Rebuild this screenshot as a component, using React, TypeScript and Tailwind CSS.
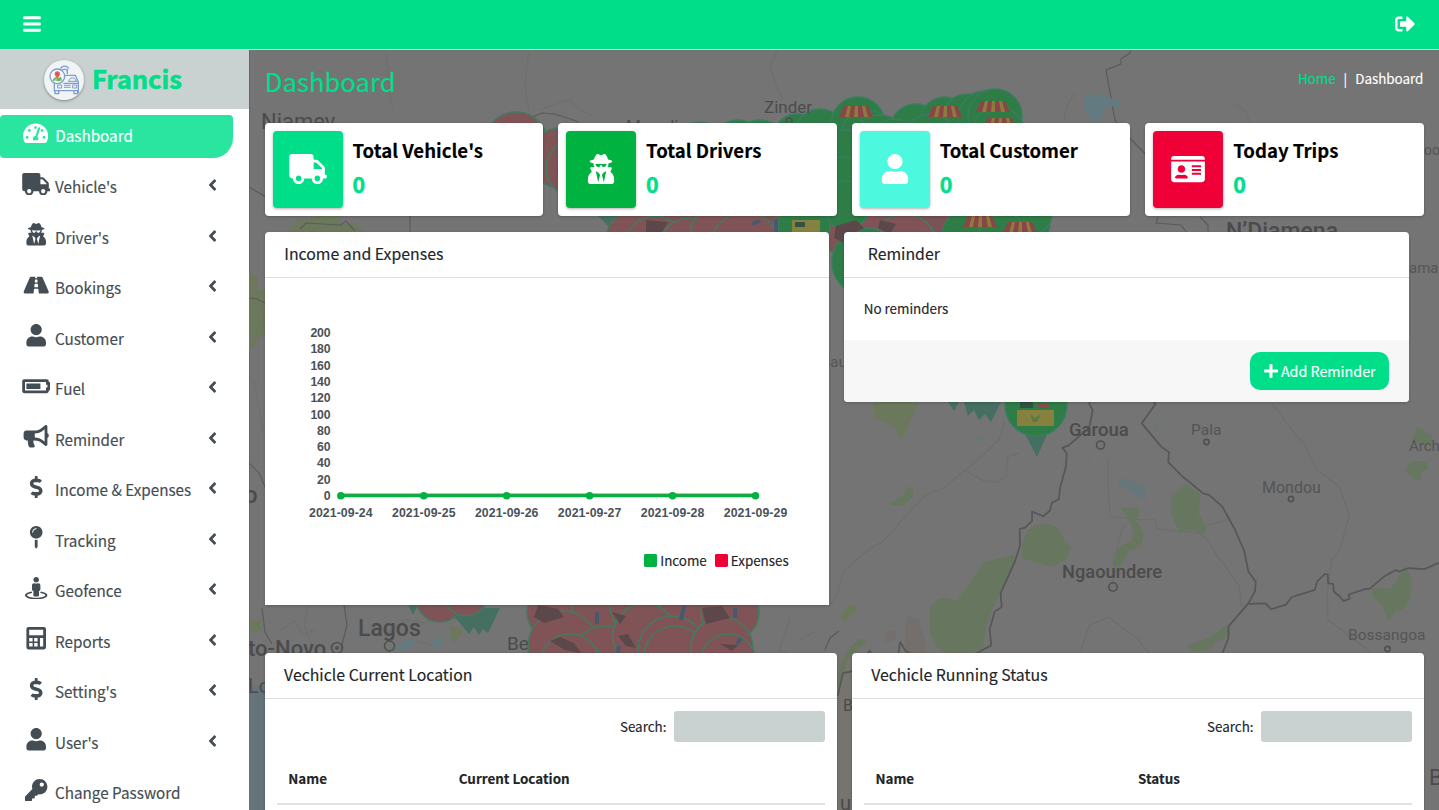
import React from "react";
import type { IconType } from "react-icons";
import {
  FaAngleLeft,
  FaBars,
  FaBatteryThreeQuarters,
  FaBullhorn,
  FaDollarSign,
  FaIdCard,
  FaKey,
  FaMapPin,
  FaPlus,
  FaRoad,
  FaSignOutAlt,
  FaSquare,
  FaStreetView,
  FaTachometerAlt,
  FaTruck,
  FaUser,
  FaUserSecret,
} from "react-icons/fa";

function Calculator({ className }: { className?: string }) {
  return (
    <svg viewBox="0 0 448 512" fill="currentColor" className={className}>
      <path
        fillRule="evenodd"
        d="M48 0h352a48 48 0 0148 48v416a48 48 0 01-48 48H48a48 48 0 01-48-48V48A48 48 0 0148 0zM64 64v122h320V64zM64 250v82h78v-82zM178 250v82h78v-82zM64 368v80h78v-80zM178 368v80h78v-80zM310 250v198h74V250z"
      />
    </svg>
  );
}

type IconComponent = IconType | typeof Calculator;

const NAV: { label: string; icon: IconComponent; arrow: boolean }[] = [
  { label: "Vehicle's", icon: FaTruck, arrow: true },
  { label: "Driver's", icon: FaUserSecret, arrow: true },
  { label: "Bookings", icon: FaRoad, arrow: true },
  { label: "Customer", icon: FaUser, arrow: true },
  { label: "Fuel", icon: FaBatteryThreeQuarters, arrow: true },
  { label: "Reminder", icon: FaBullhorn, arrow: true },
  { label: "Income & Expenses", icon: FaDollarSign, arrow: true },
  { label: "Tracking", icon: FaMapPin, arrow: true },
  { label: "Geofence", icon: FaStreetView, arrow: true },
  { label: "Reports", icon: Calculator, arrow: true },
  { label: "Setting's", icon: FaDollarSign, arrow: true },
  { label: "User's", icon: FaUser, arrow: true },
  { label: "Change Password", icon: FaKey, arrow: false },
];

const STATS: { label: string; icon: IconType; color: string }[] = [
  { label: "Total Vehicle's", icon: FaTruck, color: "bg-[#00de8a]" },
  { label: "Total Drivers", icon: FaUserSecret, color: "bg-[#00b341]" },
  { label: "Total Customer", icon: FaUser, color: "bg-[#4df9de]" },
  { label: "Today Trips", icon: FaIdCard, color: "bg-[#ef0037]" },
];

const DATES = ["2021-09-24", "2021-09-25", "2021-09-26", "2021-09-27", "2021-09-28", "2021-09-29"];
const TICKS = [200, 180, 160, 140, 120, 100, 80, 60, 40, 20, 0];

function Logo() {
  return (
    <svg viewBox="0 0 120 120" className="size-10 rounded-full bg-[#f0f4f5] shadow-[0_1px_3px_rgba(0,0,0,0.35)]" fill="none" stroke="#7f9bd1" strokeWidth="4">
      <path d="M50 26c4-10 20-10 24 0M54 32c3-6 12-6 15 0M70 28v14" />
      <path d="M62 46h32l9 20v33M31 66v26h72M31 92h72V70H58" />
      <path d="M75 64c0-14 20-14 21 0M72 64h28" strokeWidth="3" />
      <path d="M33 92v9h11v-9M90 92v9h11v-9" />
      <path d="M41 75h12v9H41zM86 75h12v9H86zM60 76h20M60 82h20" strokeWidth="3" />
      <circle cx="40" cy="49" r="22" fill="#f5f7f8" />
      <path d="M27 58l8-7 7 4 8-5 5 11-13 3-8-3-8 3z" fill="#63b45f" stroke="none" />
      <path d="M31 60l6-5 3 6zM46 56l6 1 1 4z" fill="#f0c44a" stroke="none" />
      <path d="M40 56c-5-7-8-10-8-14a8 8 0 0116 0c0 4-3 7-8 14z" fill="#ea5f5c" stroke="none" />
      <circle cx="40" cy="42" r="3" fill="#c9485a" stroke="none" />
    </svg>
  );
}

type Pin = [number, number, number];

const RED_PINS: Pin[] = [
  [516, 144, 32], [560, 158, 30], [574, 168, 28], [700, 150, 28], [636, 240, 30], [655, 246, 30], [690, 250, 32],
  [720, 236, 30], [745, 246, 34], [800, 226, 26], [844, 222, 32], [875, 240, 34], [905, 246, 32], [440, 598, 24],
  [466, 594, 22], [555, 612, 28], [600, 612, 28], [640, 606, 30], [690, 610, 30], [730, 612, 29], [563, 646, 35],
  [605, 660, 34], [645, 636, 32], [672, 650, 34], [675, 657, 31], [722, 648, 31], [728, 662, 28], [578, 672, 30], [570, 664, 30],
];

const GREEN_PINS: Pin[] = [
  [738, 146, 26], [760, 146, 26], [797, 138, 24], [820, 134, 25], [858, 124, 27], [867, 136, 26], [916, 130, 26], [945, 122, 25],
  [968, 122, 28], [985, 118, 27], [995, 116, 27], [998, 134, 27], [880, 142, 27], [895, 145, 26], [930, 140, 26],
  [845, 160, 30], [843, 185, 28], [846, 205, 24], [990, 206, 26], [1022, 222, 28], [1032, 214, 20], [804, 226, 26], [970, 236, 28], [1004, 240, 26],
  [866, 262, 34],
];

function Awning({ x, y }: { x: number; y: number }) {
  return (
    <g transform={`translate(${x} ${y})`}>
      <path d="M-12-6h24l5 11h-34z" fill="#8a4548" />
      <path d="M-8-6h3l-2 11h-4zM-1-6h3v11h-4zM6-6h3l3 11H8z" fill="#8b7c3d" />
    </g>
  );
}

function MapBackdrop() {
  return (
    <svg viewBox="249 50 1190 760" className="absolute inset-0 h-full w-full" fontFamily="Roboto, sans-serif">
      <rect x="249" y="50" width="1190" height="760" fill="#747474" />
      <path d="M249 50h1v760h-1z" fill="#666" />
      <path d="M249 686h30v124h-30z" fill="#64747a" />
      <path d="M829 655h25v155h-25z" fill="#76746f" />
      <g fill="#6b785c">
        <path d="M288 232l10-13h12l2-8 24 4 7 9 11-1 12 10zM249 273l9 4-1 13h8v42l-16 20z" />
        <path d="M874 402h44l-8 20-9 18-7-14-20-8z" />
        <path d="M840 617l8-12 12 2-15 15zM450 625l13 5-8 13-4-6zM249 622l13-3v10l-9 5z" />
      </g>
      <g fill="none" stroke="#6f706a" strokeWidth="1.200">
        <path d="M385 50c6 25 1 40 8 58M530 50c-8 30-4 45 0 67M777 50l-7 17 6 17 7 17M570 100l8 9 14 7M540 110l33-12M262 310l10 60M254 380l9 52M1065 130c-3-15 2-25 10-37M1235 105c15 5 15 20 16 30" />
        <path d="M280 630l15-9 8 14 12-5M308 605l-4 20 8 20M385 635l20-15 20 3 20-8M410 640l25 6M700 635l24-14 12 16M790 620l-11 30 10 4M800 640l14-8" />
      </g>
      <g fill="none" stroke="#5b5b5c" strokeWidth="1.200">
        <path d="M525 120l17-7 13 1 24 8M249 187l17 10M300 229l6-6 35 2 5-4 9 10M410 216v16M1130 50v3l-9 6v5l-15 6 9 50 13 16 20 21M1158 217l-2 6 25 2 6 8M1200 217l8 8v8M249 463l10 10 7 16M249 298l8 1 8 4M262 608l3 24 7 12M344 605l3 20-6 24M825 650l5-12 9-7" />
      </g>
      <g transform="translate(829 400) scale(0.389)">
        <g fill="#67775f">
          <path d="M153 267l38-22 10-20 15-2v25l-23 21-22 4zM496 370l16-36 19-12 29-6 24 10 16 19 5 21 19 12-14 32-38 20-77-24zM259 535l18-22 26-5 20 8 9-3 28-42 38-53 40-11 40-8-3 23-32 70-11 20-12 28-13 36-8 38-3 24-28 10-13 10-45 2-32-25-19-31zM749 277l48-1v20l-10 14 15 17 7 17-4 23-17 16-18 4-6 14-15 29-15-3 5-32 9-20 28-13 8-18-7-24zM918 215l38 27-5 50 13 24 7 19-11 12-20-13-41 4-19-46-1-43zM1481 423l18 43-6 47-20 29-14-2-20 28-17-40-27-26 3-20 45 4 20-26z" />
          <path d="M918 632l61-22 41-30 9 4-1 22-36 19-13 16-48 6zM16 735l16-60 20-38 28-24 20 5-50 47-24 68zM1512 68l38 24v22l-28 3-23-14zM1480 180l20-24 38 2v18l-14 9-2 20-18-1z" />
        </g>
        <g fill="#65777b">
          <path d="M747 197l23 13 8-5 12 12 21 5 5 41-15-16-13 1-20-21-25-4zM655 158l12-7 12 2-8 6zM835 68l14-5-5 9-10 5zM365 108l13-11 22-4-16 12z" />
        </g>
        <path d="M196 570l12-15 22 10 20 60-3 80-15 5-42-8 6-52zM150 592h20l4 24-30 8z" fill="#746f6c" />
        <g fill="none" stroke="#6f6f69" strokeWidth="3.500">
          <path d="M0 530l22-30 15-60 70-60 30-15 110-120 50-20 90-75 50-48 15-50M347 180l50 28 35 3 23-15 5-50 28-10M718 150v80l5 70 80 8 35-1 5 24 60 8 45 2 25-20 60-15M725 490l10-50-3-25 20-80 10-20M950 340l30 30 20 35 15 15 40 60 5 50M1140 10l60 80 20 20 35 70 55 40 28 75-25 90-22 30-10 85 2 65 60 45 45 35 25 50M647 695l-8-25 30-90 48-22 75 55 40 50 27 75M360 740l12-15 35-35 15 10 25-8 70 30 30 8h20l35-10 65-5 30 10" />
        </g>
        <g fill="none" stroke="#565757" strokeWidth="4.500" strokeLinejoin="round">
          <path d="M670 0l-1 10 9 16-9 45-52 45-17 7 11 14-2 34-15 55-3 29-18 9-5 20-17 15-29-12v24l-18 17-14 4 1 43-13 40-37 82 3 35-18 12-13 45 4 42-45 23-8 25 7 6-20 49-15 5-10 14-20-1-29 4-5-41-22 2-15-26-4-22-35-25-13-22-8 50-56 2-14-30-48 54-21 4-13 56-20 6" />
          <path d="M832 0l7 10-35 50 50 60 20 14-2 26 36 36 54 44 15 4 34 30 31 56 26 60 10 51 19 26-2 25-18 32-50 58v30l-12 30-17 43-18 7-24 68" />
          <path d="M1078 524l44-1 15 15 38-12 14-19 60-19 6-22 20-19 7 2 1 22 13 2 2 20 15 12 10 12 15-6-2-11 28-9 10-4 16-2 37-31 30-17 8 4 25-9 40 3 34-15 20-2" />
        </g>
      </g>
      <g fill="#456f60">
        <path d="M594 212h50l-28 22zM406 600h14l-7 15zM445 608l14 14 10 12 5-7 5 8 4-6 5 4 12-25zM948 402l6 9 5-9zM964 402l4 14 6-6 5 10 6-6 6 8 10-20zM1022 428h28l-13 29zM826 232h22v30z" />
        <path d="M829 125h60v100h-60z" />
      </g>
      <path d="M624 214h366v20H636z" fill="#795355" />
      <g fill="#805456" stroke="#437a62" strokeWidth="1.600">
        {RED_PINS.map(([x, y, r], i) => (
          <circle key={i} cx={x} cy={y} r={r} />
        ))}
      </g>
      <g fill="#2f7d46" stroke="#3b7c60" strokeWidth="1.400">
        {GREEN_PINS.map(([x, y, r], i) => (
          <circle key={i} cx={x} cy={y} r={r} />
        ))}
        <circle cx="1036" cy="405" r="31" />
      </g>
      <Awning x={856} y={112} />
      <Awning x={945} y={112} />
      <Awning x={993} y={107} />
      <Awning x={1000} y={124} />
      <Awning x={980} y={222} />
      <Awning x={1020} y={228} />
      <path d="M792 220h28v14h-28zM1017 410h37v16h-37z" fill="#87813f" />
      <path d="M795 222h10v5h-10zM1020 402h13v6h-13z" fill="#315242" />
      <path d="M1038 403h12v5h-12z" fill="#8a4a48" />
      <path d="M1030 414l5 4 6-4-4 8h-4z" fill="#557c42" />
      <g fill="#5c474b">
        <path d="M646 220l22 2-8 14-14-4zM836 226l20-6 8 8-10 5 12 5-20 6-12-6zM880 220l16 4-6 10-12-6zM538 605l20 4 6 8-20 6-10-6zM550 641l10-4 14 6 7 10-16-3zM618 636l10-2 8 14-10-2zM702 608l20-2 8 12-24 6zM720 644l18 1-6 6zM612 612l14 4-6 8z" />
      </g>
      <g stroke="#47586f" strokeWidth="4" fill="none">
        <path d="M752 224l8-3M776 219v14l8 3M597 612v12M619 646l-2 12M684 606l-3 14M735 608v10M741 638l-4 6M559 167l2 10M855 172l2 10" />
      </g>
      <g fill="#637b80">
        <path d="M1085 98l3-4 8 2 6-3 6 5 14 3-3 6-12-1-5 12-8 4-10-12zM392 648l16-8 10-2-10 12zM430 642l14-6-6 14z" />
      </g>
      <g fill="#4b4b4b">
        <text x="261" y="129" fontSize="22">Niamey</text>
        <text x="764" y="112.500" fontSize="17">Zinder</text>
        <text x="626" y="132" fontSize="17">Maradi</text>
        <text x="1226" y="239" fontSize="23" fontWeight="500">N’Djamena</text>
        <text x="1069" y="436" fontSize="18.500" fontWeight="500">Garoua</text>
        <text x="1062" y="577.500" fontSize="18.300" fontWeight="500">Ngaoundere</text>
        <text x="358" y="636" fontSize="23" fontWeight="500">Lagos</text>
        <text x="248" y="656" fontSize="22" fontWeight="500">to-Novo</text>
        <text x="507" y="650" fontSize="19">Be</text>
        <text x="248" y="693" fontSize="20">Lo</text>
        <text x="244" y="503" fontSize="24" fontWeight="500">o</text>
        <text x="1429" y="785" fontSize="22">B</text>
        <text x="843" y="711" fontSize="16">B</text>
        <text x="840" y="810" fontSize="20">u</text>
      </g>
      <g fill="#555">
        <text x="1191" y="435" fontSize="15.500">Pala</text>
        <text x="1262" y="493" fontSize="16">Mondou</text>
        <text x="1348" y="640" fontSize="15.500">Bossangoa</text>
        <text x="1409" y="451" fontSize="15">Arch</text>
        <text x="1409" y="273" fontSize="15">ama</text>
        <text x="1424" y="155" fontSize="14">oo</text>
        <text x="821" y="367" fontSize="15">Bauchi</text>
      </g>
      <g fill="none" stroke="#505050" strokeWidth="1.600">
        <circle cx="1100.500" cy="445" r="4" />
        <circle cx="1113" cy="587" r="4.200" />
        <circle cx="389.500" cy="646" r="5" />
        <circle cx="337" cy="648" r="5.500" />
        <circle cx="1206.500" cy="442" r="2.600" />
        <circle cx="1291" cy="499" r="2.600" />
        <circle cx="1387.500" cy="649" r="2.600" />
        <circle cx="789" cy="121" r="3" />
      </g>
      <circle cx="337" cy="648" r="2" fill="#505050" />
    </svg>
  );
}

function Chart() {
  return (
    <svg viewBox="265 278 564 262" width="564" height="262" fontFamily="Liberation Sans, Arial, sans-serif" fontSize="12.300" fontWeight="bold" fill="#4a5258">
      {TICKS.map((t, i) => (
        <text key={t} x="330.500" y={337 + i * 16.3} textAnchor="end" textLength={String(t).length * 6.7}>
          {t}
        </text>
      ))}
      <path d="M340.800 494.900H755.500" stroke="#7d8a46" strokeWidth="3" />
      <path d="M340.800 495.800H755.500" stroke="#00b341" strokeWidth="3" />
      {DATES.map((d, i) => (
        <g key={d}>
          <circle cx={340.8 + i * 82.94} cy="495.700" r="3.800" fill="#00b341" />
          <text x={340.8 + i * 82.94} y="517" textAnchor="middle" textLength="63.500">
            {d}
          </text>
        </g>
      ))}
    </svg>
  );
}

function CardHeader({ title, pad }: { title: string; pad: string }) {
  return (
    <div className={`h-[46px] shrink-0 border-b border-[#dfdfdf] pt-2.5 text-[15.85px] leading-6 ${pad}`}>{title}</div>
  );
}

function TableCard({ title, cols, widths }: { title: string; cols: string[]; widths: string }) {
  return (
    <section className="h-[300px] flex-1 rounded-[4px] bg-white shadow-[0_0_1px_rgba(0,0,0,0.13),0_1px_3px_rgba(0,0,0,0.2)]">
      <CardHeader title={title} pad="pl-[19.3px]" />
      <div className="px-3 pt-3">
        <label className="flex items-center justify-end gap-[7.5px] text-[13.4px]">
          <span className="pb-0.5">Search:</span>
          <input className="h-[31px] w-[151px] rounded-[3px] bg-[#c9d2d0] outline-none" />
        </label>
        <div className={`mt-[11px] grid h-[52px] items-center border-b-2 border-[#dee2e6] pl-[11.6px] text-[13.4px] font-bold ${widths}`}>
          {cols.map((c) => (
            <span key={c}>{c}</span>
          ))}
        </div>
      </div>
    </section>
  );
}

export default function App() {
  return (
    <div className="flex h-[810px] w-full flex-col overflow-hidden bg-white font-['Noto_Sans_CJK_SC','Open_Sans',sans-serif] leading-6 text-[#212529] [-webkit-text-stroke:0.15px]">
      <header className="flex h-[50px] shrink-0 items-center justify-between border-b border-[#dee2e6] bg-[#00de8a] pr-6 pb-[2px] pl-[23px] text-white">
        <FaBars className="h-5 w-[18px]" />
        <FaSignOutAlt className="size-5" />
      </header>
      <div className="flex min-h-0 flex-1">
        <aside className="flex w-[249px] shrink-0 flex-col overflow-hidden bg-white">
          <div className="flex h-[59px] shrink-0 items-center gap-2 bg-[#c9d2d0] pt-px pl-11">
            <Logo />
            <span className="pb-[5px] text-[25.5px] font-bold text-[#00de8a] [-webkit-text-stroke:0.6px]">Francis</span>
          </div>
          <nav className="mt-1.5 text-[15.25px] text-[#454d54]">
            <a className="flex h-[43px] w-[233px] items-center rounded-[4px] rounded-br-[20px] bg-[#2ae59f] pl-[23px] text-white">
              <FaTachometerAlt className="mb-[6px] h-[22.4px] w-[25.2px]" />
              <span className="ml-[7px] pb-[2.5px]">Dashboard</span>
            </a>
            {NAV.map(({ label, icon: Icon, arrow }) => (
              <a key={label} className="flex h-[50.5px] w-[233px] items-end pr-4 pl-[22px]">
                <span className="flex h-[43px] flex-1 items-center">
                  <Icon className="mb-[6px] h-[22.4px] w-[28.4px] shrink-0" />
                  <span className="ml-[4.6px] flex-1 pb-[2px] whitespace-nowrap">{label}</span>
                  {arrow && <FaAngleLeft className="mr-[-4px] mb-[4px] h-[18px] w-[17px]" />}
                </span>
              </a>
            ))}
          </nav>
        </aside>
        <main className="relative flex-1 overflow-hidden">
          <MapBackdrop />
          <div className="relative pr-[15px] pl-[15.75px]">
            <div className="flex h-[73px] justify-between pt-[14px]">
              <h1 className="text-[25.7px] leading-[34px] text-[#00de8a]">Dashboard</h1>
              <p className="flex gap-2 pt-0.5 pr-[0.6px] text-[13.4px] text-white">
                <span className="text-[#00de8a]">Home</span>
                <span>|</span>
                <span>Dashboard</span>
              </p>
            </div>
            <div className="grid grid-cols-4 gap-[15px]">
              {STATS.map(({ label, icon: Icon, color }) => (
                <div key={label} className="flex h-[93px] rounded-[4px] bg-white p-2 shadow-[0_0_1px_rgba(0,0,0,0.13),0_1px_3px_rgba(0,0,0,0.2)]">
                  <div className={`flex w-[70px] items-center justify-center rounded-[4px] pb-0.5 text-white shadow-[0_1px_3px_rgba(0,0,0,0.3)] ${color}`}>
                    <Icon className="h-[30px] w-[38px]" />
                  </div>
                  <div className="pt-[7px] pl-[9.8px] font-bold">
                    <div className="text-[18.6px] text-black">{label}</div>
                    <div className="mt-2.5 text-[21.4px] text-[#00de8a] [-webkit-text-stroke:0.5px]">0</div>
                  </div>
                </div>
              ))}
            </div>
            <div className="mt-4 flex items-start gap-[15px]">
              <section className="h-[373px] w-[564px] rounded-t-[4px] bg-white shadow-[0_1px_3px_rgba(0,0,0,0.2)]">
                <CardHeader title="Income and Expenses" pad="pl-[19.5px]" />
                <Chart />
                <div className="flex justify-end gap-2 pt-2 pr-10 text-[13.4px]">
                  <span className="flex items-center gap-[3px]">
                    <FaSquare className="h-[15px] w-[13px] text-[#00b341]" />
                    Income
                  </span>
                  <span className="flex items-center gap-[3px]">
                    <FaSquare className="h-[15px] w-[13px] text-[#ef0037]" />
                    Expenses
                  </span>
                </div>
              </section>
              <section className="h-[170px] w-[565px] overflow-hidden rounded-[4px] bg-white shadow-[0_1px_3px_rgba(0,0,0,0.2)]">
                <CardHeader title="Reminder" pad="pl-6" />
                <div className="h-[62px] pt-[18px] pl-5 text-[13.4px]">No reminders</div>
                <div className="flex h-[62px] items-center justify-end bg-[#f7f7f7] pr-5">
                  <button className="flex h-[38px] w-[139px] items-center justify-center gap-[2px] rounded-[10px] bg-[#00de8a] pb-px text-[14.3px] whitespace-nowrap text-white">
                    <FaPlus className="size-4 shrink-0" />
                    Add Reminder
                  </button>
                </div>
              </section>
            </div>
            <div className="mt-12 flex gap-[15px]">
              <TableCard title="Vechicle Current Location" cols={["Name", "Current Location"]} widths="grid-cols-[170.4px_1fr]" />
              <TableCard title="Vechicle Running Status" cols={["Name", "Status"]} widths="grid-cols-[262.6px_1fr]" />
            </div>
          </div>
        </main>
      </div>
    </div>
  );
}
